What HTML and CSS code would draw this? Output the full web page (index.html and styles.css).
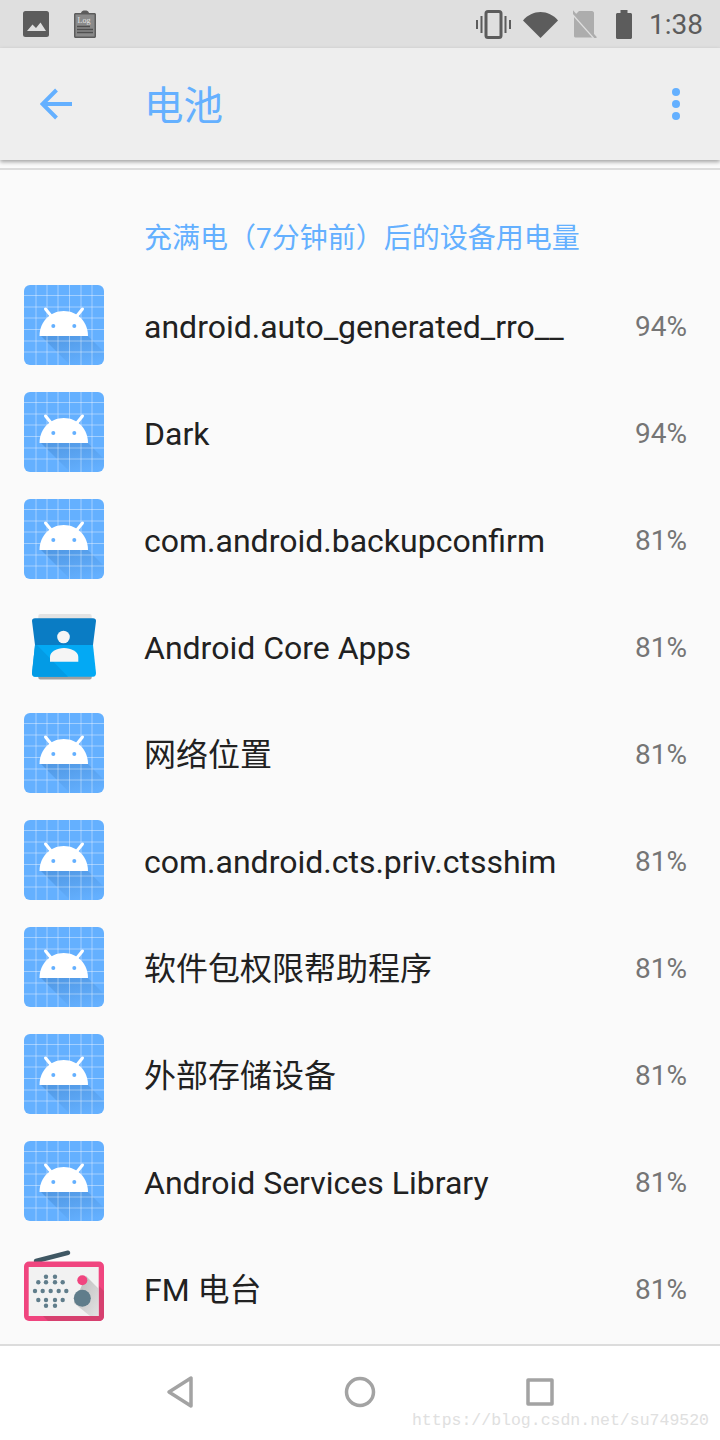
FILE: index.html
```html
<!DOCTYPE html>
<html lang="zh-CN">

<head>
    <meta charset="UTF-8">
    <meta name="viewport" content="width=device-width, initial-scale=1.0">
    <title>电池</title>

    <link rel="stylesheet" href="styles.css">
</head>

<body>
    <svg class="defs" width="0" height="0">
        <defs>
            <linearGradient id="app-fade" x1="0.25" y1="0" x2="0.8" y2="0.95">
                <stop class="fade-start" offset="0" />
                <stop class="fade-end" offset="1" />
            </linearGradient>
            <linearGradient id="fm-fade" x1="0" y1="0" x2="1" y2="1">
                <stop class="fm-fade-start" offset="0" />
                <stop class="fm-fade-end" offset="1" />
            </linearGradient>
        </defs>
        <symbol id="app-default" viewBox="0 0 80 80">
            <rect class="app-bg" width="80" height="80" rx="6" />
            <path class="app-shadow" d="M17 51H64L80 67V74C80 77 77 80 74 80H46Z" />
            <path class="app-grid" d="M12 0V80M23 0V80M34 0V80M45.500 0V80M57 0V80M68 0V80M0 10.500H80M0 22H80M0 33H80M0 44.500H80M0 56H80M0 67H80" />
            <path class="app-head" d="M15.500 51C15.500 37 26 26 39.800 26S64 37 64 51Z" />
            <path class="app-antenna" d="M28 32L21.500 24M52 32L58.500 24" />
            <circle class="app-eye" cx="29.300" cy="41" r="2" />
            <circle class="app-eye" cx="50.300" cy="41" r="2" />
        </symbol>
    </svg>

    <div class="status-bar">
        <svg class="st-image" viewBox="0 0 26 26">
            <rect class="st-dark" width="26" height="26" rx="2.500" />
            <path class="st-light" d="M4 20L9.500 13.500L13 17L17.500 11.500L23 20Z" />
        </svg>
        <svg class="st-log" viewBox="0 0 22 28">
            <path class="st-dark" d="M1.500 3H7C7.500 1 9 .5 11 .5S14.500 1 15 3H20.500C21.300 3 22 3.700 22 4.500V26.500C22 27.300 21.300 28 20.500 28H1.500C.7 28 0 27.300 0 26.500V4.500C0 3.700 .7 3 1.500 3Z" />
            <rect class="log-sheet" x="1.500" y="4.500" width="19" height="22" />
            <text class="log-word" x="3.500" y="13">Log</text>
            <path class="log-lines" d="M3 16.500H16M3 19.500H19M3 22.500H19" />
        </svg>
        <div class="st-right">
            <svg class="st-vibrate" viewBox="0 0 35 29">
                <rect class="vib-body" x="10" y="1.500" width="15" height="26" rx="2" />
                <path class="vib-wave" d="M1 10V19M5.500 6V23M29.500 6V23M34 10V19" />
            </svg>
            <svg class="st-wifi" viewBox="0 0 35 27">
                <path class="st-dark" d="M0 9.500C4.500 4 11 1 17.500 1S30.500 4 35 9.500L17.500 27Z" />
            </svg>
            <svg class="st-sim" viewBox="0 0 24 28">
                <path class="sim-body" d="M6 1H19C20 1 21 2 21 3V26C21 27 20 27.500 19 27.500H3C2 27.500 1 27 1 26V6Z" />
                <path class="sim-gap" d="M-1 2.500L23 29.500" />
                <path class="sim-slash" d="M-1 1L23 28" />
            </svg>
            <svg class="st-battery" viewBox="0 0 16 29">
                <path class="st-dark" d="M4.500 0H11.500V3H14.500C15.300 3 16 3.700 16 4.500V27.500C16 28.300 15.300 29 14.500 29H1.500C.7 29 0 28.300 0 27.500V4.500C0 3.700 .7 3 1.500 3H4.500Z" />
            </svg>
            <span class="st-time">1:38</span>
        </div>
    </div>

    <div class="toolbar">
        <svg class="tb-back" viewBox="0 0 32 32">
            <path d="M32 16H3M16.500 2L2.500 16L16.500 30" />
        </svg>
        <h1 class="tb-title">电池</h1>
        <div class="tb-more">
            <span></span>
            <span></span>
            <span></span>
        </div>
    </div>

    <div class="divider"></div>

    <div class="content">
        <p class="section-label">充满电（7分钟前）后的设备用电量</p>

        <div class="row">
            <svg class="row-icon"><use href="#app-default" /></svg>
            <span class="row-name">android.auto_generated_rro__</span>
            <span class="row-pct">94%</span>
        </div>
        <div class="row">
            <svg class="row-icon"><use href="#app-default" /></svg>
            <span class="row-name">Dark</span>
            <span class="row-pct">94%</span>
        </div>
        <div class="row">
            <svg class="row-icon"><use href="#app-default" /></svg>
            <span class="row-name">com.android.backupconfirm</span>
            <span class="row-pct">81%</span>
        </div>
        <div class="row">
            <svg class="row-icon" viewBox="0 0 80 80">
                <rect class="contact-paper" x="14.300" y="8" width="53.400" height="20" rx="2" />
                <rect class="contact-under" x="14.300" y="60" width="53.400" height="13.500" rx="2" />
                <path class="contact-top" d="M11 12.300H69Q72 12.300 72 15L69 39H11L8 15Q8 12.300 11 12.300Z" />
                <path class="contact-bottom" d="M11 39H69L72 67Q72 70.700 69 70.700H11Q8 70.700 8 67Z" />
                <path class="contact-fold" d="M11 39H13L44 70.700H11Q8 70.700 8 67Z" />
                <circle class="contact-person" cx="39.500" cy="31" r="6.300" />
                <path class="contact-person" d="M26 55.700V51C26 45.500 33 42 40 42S54.300 45.500 54.300 51V55.700Z" />
            </svg>
            <span class="row-name">Android Core Apps</span>
            <span class="row-pct">81%</span>
        </div>
        <div class="row">
            <svg class="row-icon"><use href="#app-default" /></svg>
            <span class="row-name row-name-cjk">网络位置</span>
            <span class="row-pct">81%</span>
        </div>
        <div class="row">
            <svg class="row-icon"><use href="#app-default" /></svg>
            <span class="row-name">com.android.cts.priv.ctsshim</span>
            <span class="row-pct">81%</span>
        </div>
        <div class="row">
            <svg class="row-icon"><use href="#app-default" /></svg>
            <span class="row-name row-name-cjk">软件包权限帮助程序</span>
            <span class="row-pct">81%</span>
        </div>
        <div class="row">
            <svg class="row-icon"><use href="#app-default" /></svg>
            <span class="row-name row-name-cjk">外部存储设备</span>
            <span class="row-pct">81%</span>
        </div>
        <div class="row">
            <svg class="row-icon"><use href="#app-default" /></svg>
            <span class="row-name">Android Services Library</span>
            <span class="row-pct">81%</span>
        </div>
        <div class="row">
            <svg class="row-icon" viewBox="0 0 80 80">
                <g transform="translate(0 2)">
                    <path class="fm-antenna" d="M12 11L44 2.700" />
                    <rect class="fm-case" y="11.500" width="80" height="59.500" rx="5" />
                    <path class="fm-case-shade" d="M75 36L80 41V66C80 69 78 71 75 71H24L19 66H75Z" />
                    <rect class="fm-panel" x="4.700" y="17" width="70" height="49" />
                    <path class="fm-shadow" d="M62 26L74.700 38.700V66H66L50 53Z" />
                    <circle class="fm-key" cx="58.300" cy="30.300" r="5" />
                    <circle class="fm-knob" cx="58.300" cy="48.300" r="8.500" />
                    <g class="fm-knob">
                        <circle cx="22" cy="26.700" r="2.200" /><circle cx="31" cy="26.700" r="2.200" />
                        <circle cx="14.300" cy="32.300" r="2.200" /><circle cx="22" cy="32.300" r="2.200" /><circle cx="31" cy="32.300" r="2.200" /><circle cx="38.700" cy="32.300" r="2.200" />
                        <circle cx="11" cy="41" r="2.200" /><circle cx="18.700" cy="41" r="2.200" /><circle cx="26.700" cy="41" r="2.200" /><circle cx="34.700" cy="41" r="2.200" /><circle cx="42.300" cy="41" r="2.200" />
                        <circle cx="14.300" cy="50" r="2.200" /><circle cx="22" cy="50" r="2.200" /><circle cx="31" cy="50" r="2.200" /><circle cx="38.700" cy="50" r="2.200" />
                        <circle cx="22" cy="55.700" r="2.200" /><circle cx="31" cy="55.700" r="2.200" />
                    </g>
                </g>
            </svg>
            <span class="row-name row-name-cjk">FM 电台</span>
            <span class="row-pct">81%</span>
        </div>
    </div>

    <div class="nav-bar">
        <svg class="nav-icon" viewBox="0 0 40 40">
            <path d="M31 6V34L9 20Z" />
        </svg>
        <svg class="nav-icon" viewBox="0 0 40 40">
            <circle cx="20" cy="20" r="13.500" />
        </svg>
        <svg class="nav-icon" viewBox="0 0 40 40">
            <rect x="8" y="8" width="24" height="24" />
        </svg>
        <span class="watermark">https://blog.csdn.net/su749520</span>
    </div>
</body>

</html>
```

FILE: styles.css
```css
* {
    margin: 0;
    padding: 0;
    box-sizing: border-box;
}

body {
    width: 720px;
    height: 1440px;
    overflow: hidden;
    display: flex;
    flex-direction: column;
    background-color: #fafafa;
    font-family: Roboto, "Noto Sans CJK SC", sans-serif;
}

.defs {
    position: absolute;
}

/* status bar */
.status-bar {
    height: 48px;
    flex: none;
    display: flex;
    align-items: center;
    padding: 0 17px 0 23px;
    background-color: #dfdfdf;
}

.st-dark {
    fill: #5c5c5c;
}

.st-light {
    fill: #dfdfdf;
}

.st-image {
    width: 26px;
    height: 26px;
}

.st-log {
    width: 22px;
    height: 28px;
    margin-left: 25px;
}

.log-sheet {
    fill: #8a8a8a;
}

.log-word {
    font-family: "Liberation Serif", serif;
    font-size: 8px;
    fill: #e4e4e4;
}

.log-lines {
    stroke: #4f4f4f;
    stroke-width: 1.500;
}

.st-right {
    margin-left: auto;
    display: flex;
    align-items: center;
}

.st-vibrate {
    width: 35px;
    height: 29px;
}

.vib-body {
    fill: none;
    stroke: #5c5c5c;
    stroke-width: 3;
}

.vib-wave {
    stroke: #5c5c5c;
    stroke-width: 2;
}

.st-wifi {
    width: 35px;
    height: 27px;
    margin-left: 12px;
}

.st-sim {
    width: 24px;
    height: 28px;
    margin-left: 15px;
}

.sim-body {
    fill: #adadad;
}

.sim-gap {
    stroke: #dfdfdf;
    stroke-width: 3;
}

.sim-slash {
    stroke: #adadad;
    stroke-width: 2.500;
}

.st-battery {
    width: 16px;
    height: 29px;
    margin-left: 19px;
}

.st-time {
    margin-left: 17px;
    font-size: 28px;
    color: #5c5c5c;
}

/* toolbar */
.toolbar {
    height: 112px;
    flex: none;
    display: flex;
    align-items: center;
    padding: 0 40px;
    background-color: #eeeeee;
    box-shadow: 0 2px 4px rgba(0, 0, 0, .35);
}

.tb-back {
    width: 32px;
    height: 32px;
    flex: none;
}

.tb-back path {
    fill: none;
    stroke: #64b0ff;
    stroke-width: 4;
}

.tb-title {
    margin-left: 72px;
    padding-bottom: 3px;
    font-size: 39.500px;
    font-weight: 400;
    color: #64b0ff;
}

.tb-more {
    margin-left: auto;
    display: flex;
    flex-direction: column;
    gap: 4px;
}

.tb-more span {
    width: 8px;
    height: 8px;
    border-radius: 50%;
    background-color: #64b0ff;
}

.divider {
    height: 2px;
    flex: none;
    margin-top: 8px;
    background-color: #dcdcdc;
}

/* list */
.content {
    flex: 1;
}

.section-label {
    height: 102px;
    padding: 51px 0 0 144px;
    font-size: 28px;
    line-height: 36px;
    color: #64b0ff;
}

.row {
    height: 107px;
    display: flex;
    align-items: center;
    padding: 0 33px 1px 24px;
}

.row-icon {
    width: 80px;
    height: 80px;
    flex: none;
}

.row-name {
    margin-left: 40px;
    padding-top: 4px;
    font-size: 32px;
    color: #212121;
}

.row-name-cjk {
    padding-top: 0;
    padding-bottom: 2px;
}

.row-pct {
    margin-left: auto;
    padding-top: 3px;
    font-size: 28px;
    color: #757575;
}

/* default android icon */
.app-bg {
    fill: #64b0ff;
}

.app-shadow {
    fill: url(#app-fade);
}

.fade-start {
    stop-color: #2f6fb5;
    stop-opacity: .35;
}

.fade-end {
    stop-color: #2f6fb5;
    stop-opacity: 0;
}

.app-grid {
    fill: none;
    stroke: #ffffff;
    stroke-opacity: .4;
    stroke-width: 1;
}

.app-head {
    fill: #ffffff;
}

.app-antenna {
    stroke: #ffffff;
    stroke-width: 3;
    stroke-linecap: round;
}

.app-eye {
    fill: #64b0ff;
}

/* contacts icon */
.contact-paper {
    fill: #e3e3e3;
}

.contact-under {
    fill: #a0a0a0;
}

.contact-top {
    fill: #0a7cc4;
}

.contact-bottom {
    fill: #03a9f4;
}

.contact-fold {
    fill: #039be5;
}

.contact-person {
    fill: #f5f5f5;
}

/* fm radio icon */
.fm-antenna {
    stroke: #3f5763;
    stroke-width: 4.500;
    stroke-linecap: round;
}

.fm-case {
    fill: #f0457f;
}

.fm-case-shade {
    fill: #d6406f;
}

.fm-panel {
    fill: #f2f2f2;
}

.fm-shadow {
    fill: url(#fm-fade);
}

.fm-fade-start {
    stop-color: #9a9a9a;
    stop-opacity: .7;
}

.fm-fade-end {
    stop-color: #d8d8d8;
    stop-opacity: .6;
}

.fm-key {
    fill: #f0457f;
}

.fm-knob {
    fill: #607d8b;
}

/* nav bar */
.nav-bar {
    position: relative;
    height: 96px;
    flex: none;
    display: flex;
    align-items: center;
    justify-content: center;
    gap: 140px;
    padding-bottom: 2px;
    border-top: 2px solid #dcdcdc;
    background-color: #ffffff;
}

.nav-icon {
    width: 40px;
    height: 40px;
}

.nav-icon path,
.nav-icon circle,
.nav-icon rect {
    fill: none;
    stroke: #a3a3a3;
    stroke-width: 3.500;
    stroke-linejoin: round;
}

.watermark {
    position: absolute;
    right: 11px;
    bottom: 10px;
    font-family: "Liberation Mono", monospace;
    font-size: 16.500px;
    color: #e0e0e0;
}
```
